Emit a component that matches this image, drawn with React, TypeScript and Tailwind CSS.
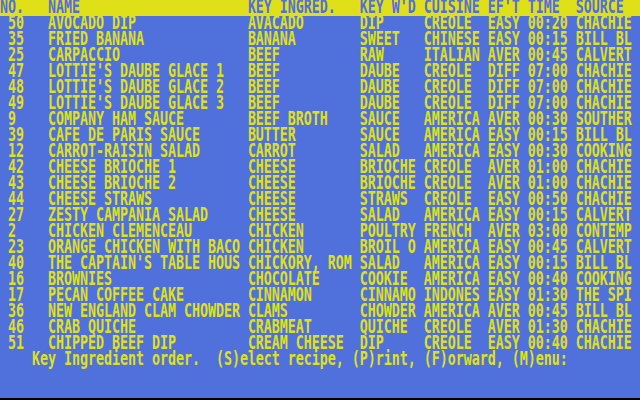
const rows: [string, string, string, string, string, string, string, string][] = [
  ['50', 'AVOCADO DIP', 'AVACADO', 'DIP', 'CREOLE', 'EASY', '00:20', 'CHACHIE'],
  ['35', 'FRIED BANANA', 'BANANA', 'SWEET', 'CHINESE', 'EASY', '00:15', 'BILL BL'],
  ['25', 'CARPACCIO', 'BEEF', 'RAW', 'ITALIAN', 'AVER', '00:45', 'CALVERT'],
  ['47', "LOTTIE'S DAUBE GLACE 1", 'BEEF', 'DAUBE', 'CREOLE', 'DIFF', '07:00', 'CHACHIE'],
  ['48', "LOTTIE'S DAUBE GLACE 2", 'BEEF', 'DAUBE', 'CREOLE', 'DIFF', '07:00', 'CHACHIE'],
  ['49', "LOTTIE'S DAUBE GLACE 3", 'BEEF', 'DAUBE', 'CREOLE', 'DIFF', '07:00', 'CHACHIE'],
  ['9', 'COMPANY HAM SAUCE', 'BEEF BROTH', 'SAUCE', 'AMERICA', 'AVER', '00:30', 'SOUTHER'],
  ['39', 'CAFE DE PARIS SAUCE', 'BUTTER', 'SAUCE', 'AMERICA', 'EASY', '00:15', 'BILL BL'],
  ['12', 'CARROT-RAISIN SALAD', 'CARROT', 'SALAD', 'AMERICA', 'EASY', '00:30', 'COOKING'],
  ['42', 'CHEESE BRIOCHE 1', 'CHEESE', 'BRIOCHE', 'CREOLE', 'AVER', '01:00', 'CHACHIE'],
  ['43', 'CHEESE BRIOCHE 2', 'CHEESE', 'BRIOCHE', 'CREOLE', 'AVER', '01:00', 'CHACHIE'],
  ['44', 'CHEESE STRAWS', 'CHEESE', 'STRAWS', 'CREOLE', 'EASY', '00:50', 'CHACHIE'],
  ['27', 'ZESTY CAMPANIA SALAD', 'CHEESE', 'SALAD', 'AMERICA', 'EASY', '00:15', 'CALVERT'],
  ['2', 'CHICKEN CLEMENCEAU', 'CHICKEN', 'POULTRY', 'FRENCH', 'AVER', '03:00', 'CONTEMP'],
  ['23', 'ORANGE CHICKEN WITH BACO', 'CHICKEN', 'BROIL O', 'AMERICA', 'EASY', '00:45', 'CALVERT'],
  ['40', "THE CAPTAIN'S TABLE HOUS", 'CHICKORY, ROM', 'SALAD', 'AMERICA', 'EASY', '00:15', 'BILL BL'],
  ['16', 'BROWNIES', 'CHOCOLATE', 'COOKIE', 'AMERICA', 'EASY', '00:40', 'COOKING'],
  ['17', 'PECAN COFFEE CAKE', 'CINNAMON', 'CINNAMO', 'INDONES', 'EASY', '01:30', 'THE SPI'],
  ['36', 'NEW ENGLAND CLAM CHOWDER', 'CLAMS', 'CHOWDER', 'AMERICA', 'AVER', '00:45', 'BILL BL'],
  ['46', 'CRAB QUICHE', 'CRABMEAT', 'QUICHE', 'CREOLE', 'AVER', '01:30', 'CHACHIE'],
  ['51', 'CHIPPED BEEF DIP', 'CREAM CHEESE', 'DIP', 'CREOLE', 'EASY', '00:40', 'CHACHIE'],
];

// column widths in character cells (8px each)
const cols = [5, 25, 14, 8, 8, 5, 6, 8];

const line = (cells: string[], first = cols[0]) =>
  cells.map((c, i) => c.padEnd(i === 0 ? first : cols[i])).join('');

const header = line(['NO.', 'NAME', 'KEY INGRED.', "KEY W'D", 'CUISINE', "EF'T", 'TIME', 'SOURCE'], 6);

function TextRow({ text }: { text: string }) {
  // 8x16 cells, glyphs stretched tall like a double-scanned ROM font
  return (
    <div className="h-4 leading-4 whitespace-pre scale-y-[1.445] origin-[0_9.4px]">{text}</div>
  );
}

export default function App() {
  return (
    <div
      className="w-[640px] h-[400px] flex flex-col bg-[#5070dc] text-[#e0e018] text-[13.29px] font-bold overflow-hidden"
      style={{ fontFamily: '"DejaVu Sans Mono", "Liberation Mono", monospace' }}
    >
      <div className="h-4 bg-[#e0e018] text-[#5070dc]">
        <TextRow text={header} />
      </div>
      {rows.map((r) => (
        <TextRow key={r[0]} text={' ' + line(r)} />
      ))}
      <TextRow text="    Key Ingredient order.  (S)elect recipe, (P)rint, (F)orward, (M)enu:" />
      <div className="flex-1" />
      <div className="h-[2px] bg-black" />
    </div>
  );
}
